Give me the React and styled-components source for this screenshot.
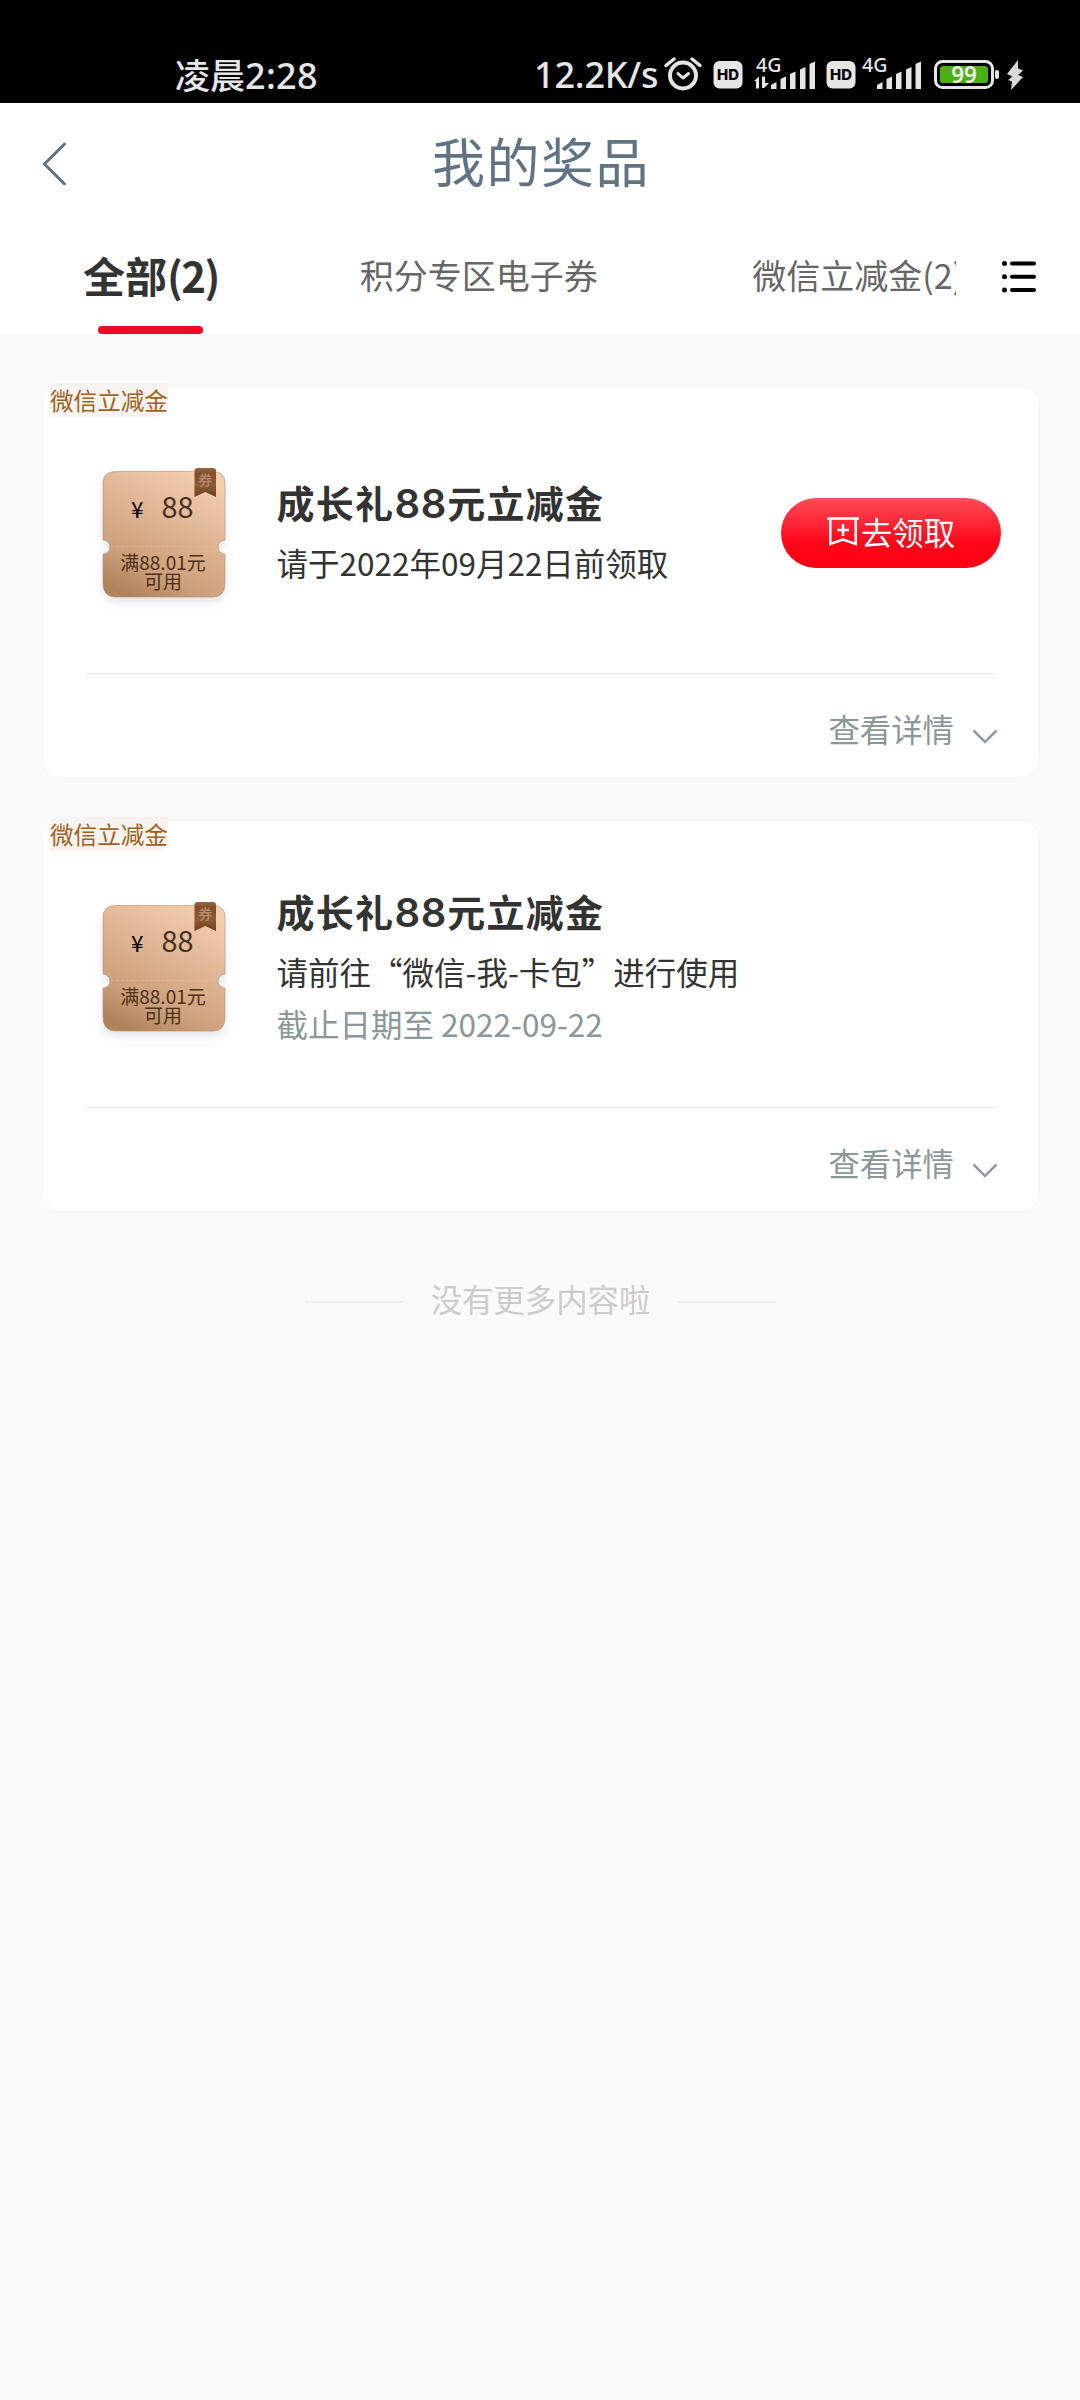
import React from 'react'
import styled, { createGlobalStyle } from 'styled-components'

const GlobalStyle = createGlobalStyle`
  * { box-sizing: border-box; }
  body {
    margin: 0;
    background: #fafafa;
    font-family: "Noto Sans CJK SC", sans-serif;
    color: #333;
  }
`

const Page = styled.div`
  width: 1080px;
  height: 2400px;
  overflow: hidden;
  background: #fafafa;
`

/* ---------- status bar ---------- */

const StatusBar = styled.div`
  height: 103px;
  padding: 54px 56px 7px 175px;
  background: #000;
  color: #e6e6e6;
  display: flex;
  justify-content: space-between;
`

const Clock = styled.div`
  font-size: 35px;
  line-height: 39px;
  font-weight: 500;
  white-space: nowrap;
`

const Latin = styled.span`
  font-family: "Noto Sans", sans-serif;
  font-weight: 500;
  font-size: 36px;
  letter-spacing: 0.3px;
`

const StatusIcons = styled.div`
  display: flex;
  height: 42px;
`

const Speed = styled(Latin)`
  line-height: 42px;
  width: 130.5px;
  letter-spacing: -0.2px;
  white-space: nowrap;
`

const Glyph = styled.svg`
  display: block;
  flex: none;
  overflow: visible;
  margin-left: ${({ $gap }) => $gap || 0}px;
`

/* ---------- header ---------- */

const Header = styled.header`
  height: 119px;
  background: #fff;
  display: grid;
  grid-template-columns: 110px 1fr 110px;
  align-items: center;
`

const BackIcon = styled.svg`
  margin-left: 40px;
`

const Title = styled.h1`
  margin: 0 0 5px;
  padding-left: 2px;
  text-align: center;
  font-size: 53px;
  line-height: 80px;
  font-weight: 400;
  letter-spacing: 1.5px;
  color: #5f7383;
`

const TabBar = styled.nav`
  height: 112px;
  background: #fff;
  display: flex;
`

const Tabs = styled.div`
  width: 956px;
  padding-left: 83px;
  overflow: hidden;
  display: flex;
  flex: none;
`

const Tab = styled.div`
  flex: none;
  height: 112px;
  margin-right: ${({ $space }) => $space || 0}px;
  display: flex;
  flex-direction: column;
  align-items: center;
  white-space: nowrap;
  font-size: ${({ $active }) => ($active ? 42 : 34)}px;
  font-weight: ${({ $active }) => ($active ? 700 : 400)};
  line-height: 106px;
  color: ${({ $active }) => ($active ? '#333' : '#666')};
`

const Count = styled.span`
  letter-spacing: -1.6px;
`

const Underline = styled.span`
  width: 105px;
  height: 8px;
  margin-top: -2px;
  border-radius: 4px;
  background: #ee0a24;
`

const MenuIcon = styled.svg`
  margin: 38px 0 0 44px;
`

/* ---------- cards ---------- */

const List = styled.main`
  padding: 53px 42px 0 43px;
  display: flex;
  flex-direction: column;
  gap: 44px;
`

const Card = styled.section`
  height: 390px;
  padding: 0 42px;
  position: relative;
  background: #fff;
  border-radius: 18px;
  box-shadow: 0 0 14px rgba(0, 0, 0, 0.02);
`

const Tag = styled.span`
  position: absolute;
  left: 7px;
  top: -4px;
  height: 34px;
  font-size: 23.6px;
  line-height: 35px;
  color: #9c6420;
  background: #f7f3f0;
  border-radius: 8px 0 10px 0;
`

const CardBody = styled.div`
  height: 287px;
  display: flex;
  border-bottom: 1px solid #e9e9e9;
`

const Coupon = styled.div`
  position: relative;
  width: 126px;
  margin: 77px 0 0 16px;
  flex: none;
  color: #4e2f15;
`

const CouponBg = styled.svg`
  position: absolute;
  left: -8px;
  top: 0;
`

const Amount = styled.div`
  position: relative;
  height: 77px;
  padding: 23px 0 0 30px;
  display: flex;
  align-items: baseline;
  font-size: 29px;
  line-height: 36px;
  color: #453022;
`

const Yen = styled.span`
  width: 30.5px;
  font-size: 22.5px;
  color: #000;
`

const Condition = styled.div`
  position: relative;
  padding: 11px 2px 0 0;
  text-align: center;
  font-size: 19px;
  line-height: 19px;
`

const Info = styled.div`
  flex: 1;
  padding: ${({ $top }) => $top}px 0 0 49.5px;
  white-space: nowrap;
`

const Name = styled.h2`
  margin: 0 0 6px;
  font-size: 38px;
  line-height: 52px;
  font-weight: 700;
  letter-spacing: 1.3px;
`

const Digits = styled.span`
  font-family: Inter, sans-serif;
  font-weight: 600;
  font-size: 40px;
  letter-spacing: 0.8px;
`

const Line = styled.p`
  margin: 0;
  font-size: 31.5px;
  line-height: 52px;
  color: ${({ $muted }) => ($muted ? '#8a979b' : '#333')};
`

const ClaimButton = styled.button`
  width: 220px;
  height: 70px;
  margin: 111px -5px 0 0;
  padding: 0 0 4px 0;
  flex: none;
  border: 0;
  border-radius: 35px;
  background: linear-gradient(#ff4d57, #ff0519 65%, #ff0012);
  color: #fff;
  font-family: inherit;
  font-size: 31.4px;
  display: flex;
  align-items: center;
  justify-content: center;
  gap: 2px;
`

const Detail = styled.div`
  padding-top: 29px;
  display: flex;
  justify-content: flex-end;
  font-size: 31.4px;
  line-height: 52px;
  color: #8a979b;
`

const Chevron = styled.svg`
  margin: 26px -2px 0 18px;
`

const NoMore = styled.div`
  margin-top: 67px;
  padding-left: 1px;
  display: flex;
  align-items: center;
  justify-content: center;
  gap: 28px;
  font-size: 31.4px;
  line-height: 52px;
  color: #ccc;

  &:before, &:after {
    content: "";
    width: 98px;
    height: 2px;
    background: #eee;
  }
`

const NoMoreText = styled.span`
  margin-top: -5px;
`

const HdIcon = ({ gap }) => (
  <Glyph $gap={gap} width="30" height="42" viewBox="0 0 30 42">
    <rect x="0.5" y="7" width="29" height="27.5" rx="6" fill="#e6e6e6" />
    <text x="15" y="26" textAnchor="middle" textLength="22" lengthAdjust="spacingAndGlyphs" fontFamily="Inter, sans-serif" fontWeight="800" fontSize="14.5" fill="#000">HD</text>
  </Glyph>
)

const SignalIcon = ({ gap, arrows }) => (
  <Glyph $gap={gap} width="62" height="42" viewBox="0 0 62 42" fill="#e6e6e6">
    <text x="1" y="17.5" fontFamily="Noto Sans, sans-serif" fontWeight="500" fontSize="19.5">4G</text>
    {arrows && <path d="M-1 27l5-4.500v12h-3v-7.500zM7 22.500h3v6.500h4l-5 5h-2z" />}
    <path d="M16 35v-4l5.500-3v7zM25.500 35v-10l5.500-2.500v12.500zM35 35v-15l5.500-2.500v17.500zM45 35v-19.500l5.500-2.500v22zM54.500 35v-25l5.500-2.500v27.500z" />
  </Glyph>
)

const Battery = () => (
  <Glyph $gap={11.5} width="66" height="42" viewBox="0 0 66 42">
    <rect x="1.500" y="7.500" width="57" height="26" rx="7" fill="none" stroke="#e6e6e6" strokeWidth="3" />
    <rect x="6" y="12" width="48" height="17" rx="3" fill="#4caf13" />
    <rect x="61" y="16" width="4" height="9" rx="2" fill="#e6e6e6" />
    <text x="30" y="29" textAnchor="middle" fontFamily="Noto Sans, sans-serif" fontWeight="600" fontSize="22.500" fill="#eee">99</text>
  </Glyph>
)

const StatusRow = () => (
  <StatusBar>
    <Clock>凌晨<Latin>2:28</Latin></Clock>
    <StatusIcons>
      <Speed>12.2K/s</Speed>
      <Glyph width="38" height="42" viewBox="0 0 38 42" fill="none" stroke="#e6e6e6" strokeLinecap="round">
        <circle cx="18" cy="21.500" r="13" strokeWidth="4" />
        <path d="M13 19.500l5 4.500 5.500-4.500" strokeWidth="3" strokeLinejoin="round" />
        <path d="M1 11.500l8-6.500M35 11.500l-8-6.500" strokeWidth="3.500" />
      </Glyph>
      <HdIcon gap={10} />
      <SignalIcon gap={12} arrows />
      <HdIcon gap={9} />
      <SignalIcon gap={5} />
      <Battery />
      <Glyph $gap={6} width="18" height="42" viewBox="0 0 18 42">
        <path d="M12 6L1 20l5.500 2.500L2 26l4 1.500L5 36 17 23l-5-2 5-4.500-5-2z" fill="#d9d9d9" />
      </Glyph>
    </StatusIcons>
  </StatusBar>
)

const CouponIcon = ({ id }) => (
  <Coupon>
    <CouponBg width="142" height="160" viewBox="-8 0 142 160">
      <defs>
        <linearGradient id={`paper-${id}`} x1="0.750" y1="0" x2="0.250" y2="1">
          <stop offset="0" stopColor="#f2ceaf" />
          <stop offset="0.550" stopColor="#d8ac8a" />
          <stop offset="0.750" stopColor="#cda17d" />
          <stop offset="1" stopColor="#b0835c" />
        </linearGradient>
        <linearGradient id={`ribbon-${id}`} x1="0" y1="0" x2="0" y2="1">
          <stop offset="0" stopColor="#9a6640" />
          <stop offset="0.200" stopColor="#7f4e2b" />
          <stop offset="0.600" stopColor="#8c5a36" />
          <stop offset="1" stopColor="#6f3d18" />
        </linearGradient>
        <filter id={`shadow-${id}`} x="-20%" y="-20%" width="140%" height="150%">
          <feDropShadow dx="0" dy="5" stdDeviation="4" floodColor="#8c96a0" floodOpacity="0.250" />
        </filter>
      </defs>
      <path
        d="M15 7.500h97q12 0 12 12v56.500a7 7 0 0 0 0 14v29q0 14-12 14h-97q-13 0-13-14v-29a7 7 0 0 0 0-14v-56.500q0-12 13-12z"
        fill={`url(#paper-${id})`}
        stroke="#b5906f"
        strokeOpacity="0.600"
        filter={`url(#shadow-${id})`}
      />
      <path d="M10 82.500h106" stroke="#e8c6a8" strokeWidth="1" strokeDasharray="3 2" opacity="0.350" />
      <path d="M93.500 7q0-3 3-3h15.500q3 0 3 3v26l-10.700-5-10.800 5z" fill={`url(#ribbon-${id})`} />
      <text x="104.300" y="21" textAnchor="middle" fontSize="14" fontWeight="500" fill="#b58a68">券</text>
    </CouponBg>
    <Amount><Yen>¥</Yen>88</Amount>
    <Condition>满88.01元<br />可用</Condition>
  </Coupon>
)

const ClaimIcon = () => (
  <svg width="32" height="31" viewBox="0 0 32 31" fill="none" stroke="#fff" strokeWidth="2.500">
    <path d="M0 2.500h32M3.300 2.500v25.500l12.700-4.500 12.700 4.500v-25.500" />
    <path d="M16 8v12M10 14h12" />
  </svg>
)

const prizes = [
  { id: 1, top: 89, claimable: true, lines: [{ text: '请于2022年09月22日前领取' }] },
  {
    id: 2,
    top: 64,
    lines: [
      { text: '请前往“微信-我-卡包”进行使用' },
      { text: '截止日期至 2022-09-22', muted: true },
    ],
  },
]

const PrizeCard = ({ prize }) => (
  <Card>
    <Tag>微信立减金</Tag>
    <CardBody>
      <CouponIcon id={prize.id} />
      <Info $top={prize.top}>
        <Name>成长礼<Digits>88</Digits>元立减金</Name>
        {prize.lines.map((line) => (
          <Line key={line.text} $muted={line.muted}>{line.text}</Line>
        ))}
      </Info>
      {prize.claimable && <ClaimButton><ClaimIcon />去领取</ClaimButton>}
    </CardBody>
    <Detail>
      查看详情
      <Chevron width="26" height="16" viewBox="0 0 26 16" fill="none" stroke="#929da1" strokeWidth="2.500">
        <path d="M1.500 1.500l11.500 11.500 11.500-11.500" />
      </Chevron>
    </Detail>
  </Card>
)

export default function App() {
  return (
    <Page>
      <GlobalStyle />
      <StatusRow />
      <Header>
        <BackIcon width="30" height="44" viewBox="0 0 30 44" fill="none" stroke="#5f7383" strokeWidth="3" strokeLinecap="round">
          <path d="M24.500 3l-20 20 20 20" />
        </BackIcon>
        <Title>我的奖品</Title>
      </Header>
      <TabBar>
        <Tabs>
          <Tab $active $space={141}><span>全部<Count>(2)</Count></span><Underline /></Tab>
          <Tab $space={154.5}>积分专区电子券</Tab>
          <Tab>微信立减金(2)</Tab>
        </Tabs>
        <MenuIcon width="38" height="34" viewBox="0 0 38 34" stroke="#000" strokeWidth="4" strokeLinecap="round">
          <path d="M12 3.500h22M12 16.700h22M12 30h22" />
          <path d="M4.500 3.500h.01M4.500 16.700h.01M4.500 30h.01" strokeWidth="5" />
        </MenuIcon>
      </TabBar>
      <List>
        {prizes.map((prize) => (
          <PrizeCard key={prize.id} prize={prize} />
        ))}
      </List>
      <NoMore><NoMoreText>没有更多内容啦</NoMoreText></NoMore>
    </Page>
  )
}
